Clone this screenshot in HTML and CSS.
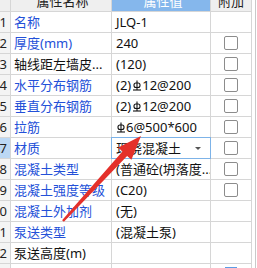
FILE: index.html
```html
<!DOCTYPE html>
<html lang="zh">
<head>
<meta charset="utf-8">
<title>属性</title>
<link rel="stylesheet" href="styles.css">
</head>
<body>
<div class="page">
  <div class="table">
    <div class="row head">
      <div class="c num"></div>
      <div class="c name"><span class="ht">属性名称</span></div>
      <div class="c val hsel"><span class="ht">属性值</span></div>
      <div class="c att"><span class="ht">附加</span></div>
    </div>
    <div class="row">
      <div class="c num">1</div><div class="c name blue">名称</div><div class="c val">JLQ-1</div><div class="c att"></div>
    </div>
    <div class="row">
      <div class="c num">2</div><div class="c name blue">厚度(mm)</div><div class="c val">240</div><div class="c att"><span class="cb"></span></div>
    </div>
    <div class="row">
      <div class="c num">3</div><div class="c name">轴线距左墙皮...</div><div class="c val">(120)</div><div class="c att"><span class="cb"></span></div>
    </div>
    <div class="row">
      <div class="c num">4</div><div class="c name blue">水平分布钢筋</div><div class="c val">(2)<svg class="rebar" viewBox="0 0 8 11" aria-label="HRB400"><line x1="4" y1="0.5" x2="4" y2="10"/><rect x="1" y="3" width="6" height="4.5" rx="2"/><line x1="0" y1="10" x2="8" y2="10"/></svg>12@200</div><div class="c att"><span class="cb"></span></div>
    </div>
    <div class="row">
      <div class="c num">5</div><div class="c name blue">垂直分布钢筋</div><div class="c val">(2)<svg class="rebar" viewBox="0 0 8 11" aria-label="HRB400"><line x1="4" y1="0.5" x2="4" y2="10"/><rect x="1" y="3" width="6" height="4.5" rx="2"/><line x1="0" y1="10" x2="8" y2="10"/></svg>12@200</div><div class="c att"><span class="cb"></span></div>
    </div>
    <div class="row">
      <div class="c num">6</div><div class="c name blue">拉筋</div><div class="c val"><svg class="rebar first" viewBox="0 0 8 11" aria-label="HRB400"><line x1="4" y1="0.5" x2="4" y2="10"/><rect x="1" y="3" width="6" height="4.5" rx="2"/><line x1="0" y1="10" x2="8" y2="10"/></svg>6@500*600</div><div class="c att"><span class="cb"></span></div>
    </div>
    <div class="row">
      <div class="c num cur">7</div><div class="c name blue">材质</div><div class="c val edit"><div class="select"><span>现浇混凝土</span><i class="caret"></i></div></div><div class="c att"><span class="cb"></span></div>
    </div>
    <div class="row">
      <div class="c num">8</div><div class="c name blue">混凝土类型</div><div class="c val">(普通砼(坍落度...</div><div class="c att"><span class="cb"></span></div>
    </div>
    <div class="row">
      <div class="c num">9</div><div class="c name blue">混凝土强度等级</div><div class="c val">(C20)</div><div class="c att"><span class="cb"></span></div>
    </div>
    <div class="row">
      <div class="c num">10</div><div class="c name blue">混凝土外加剂</div><div class="c val">(无)</div><div class="c att"></div>
    </div>
    <div class="row">
      <div class="c num">11</div><div class="c name blue">泵送类型</div><div class="c val">(混凝土泵)</div><div class="c att"></div>
    </div>
    <div class="row">
      <div class="c num">12</div><div class="c name">泵送高度(m)</div><div class="c val"></div><div class="c att"></div>
    </div>
    <div class="row">
      <div class="c num">13</div><div class="c name"></div><div class="c val"></div><div class="c att"><span class="cbtop"></span></div>
    </div>
  </div>
  <div class="side"></div>
  <svg class="arrow" width="257" height="268" viewBox="0 0 257 268" aria-hidden="true">
    <polygon points="141,136 131.4,159.8 127.1,155.9 63.9,221.8 62.1,220.2 122.4,151.5 118.2,147.6"/>
  </svg>
</div>
</body>
</html>
```
FILE: styles.css
```css
html, body {
  margin: 0;
  padding: 0;
  background: #fff;
}
body {
  font-family: "Noto Sans", "Noto Sans CJK SC", sans-serif;
  font-size: 13px;
  color: #111;
  overflow: hidden;
  width: 257px;
  height: 268px;
}
.page {
  position: relative;
  display: flex;
  align-items: flex-start;
  width: 257px;
  height: 268px;
  overflow: hidden;
}
.table {
  display: flex;
  flex-direction: column;
  width: 252px;
}
.row {
  display: grid;
  grid-template-columns: 11px 101px 99px 41px;
  height: 21px;
}
.c {
  box-sizing: border-box;
  border-right: 1px solid #d6d6d6;
  border-bottom: 1px solid #d6d6d6;
  display: flex;
  align-items: center;
  overflow: hidden;
  white-space: nowrap;
  line-height: 20px;
}
.head {
  height: 12px;
}
.head .c {
  background: #efefef;
  align-items: flex-start;
  justify-content: center;
  color: #222;
}
.head .ht {
  display: block;
  line-height: 21px;
  margin-top: -9px;
}
.head .hsel {
  background: #85b7ec;
  color: #fff;
}
.num {
  background: #f4f4f4;
  justify-content: flex-end;
  padding-right: 3px;
  color: #222;
}
.num.cur {
  background: #bcd8f4;
}
.name {
  padding-left: 3px;
}
.blue {
  color: #2350d8;
}
.val {
  padding-left: 4px;
  color: #111;
}
.rebar {
  width: 8px;
  height: 11px;
  margin: 0 1px 0 2px;
  fill: none;
  stroke: #111;
  stroke-width: 1.1;
}
.rebar.first {
  margin-left: 1px;
}
.att {
  justify-content: center;
}
.cb {
  box-sizing: border-box;
  width: 14px;
  height: 14px;
  border: 1px solid #8c8c8c;
  border-radius: 2px;
  background: #fff;
}
.cbtop {
  align-self: flex-start;
  margin-top: 3px;
  width: 12px;
  height: 3px;
  background: #5c9de6;
}
.edit {
  position: relative;
  overflow: visible;
}
.select {
  position: absolute;
  top: -1px;
  left: -1px;
  right: -1px;
  bottom: -1px;
  box-sizing: border-box;
  border: 1px solid #7db3e8;
  background: #fff;
  display: flex;
  align-items: center;
  justify-content: space-between;
  padding: 0 9px 0 4px;
}
.caret {
  width: 0;
  height: 0;
  border-left: 3px solid transparent;
  border-right: 3px solid transparent;
  border-top: 3px solid #555;
}
.side {
  width: 3px;
  height: 268px;
  border-right: 1px solid #c9c9c9;
}
.arrow {
  position: absolute;
  left: 0;
  top: 0;
  pointer-events: none;
}
.arrow polygon {
  fill: #e4302a;
}
```
